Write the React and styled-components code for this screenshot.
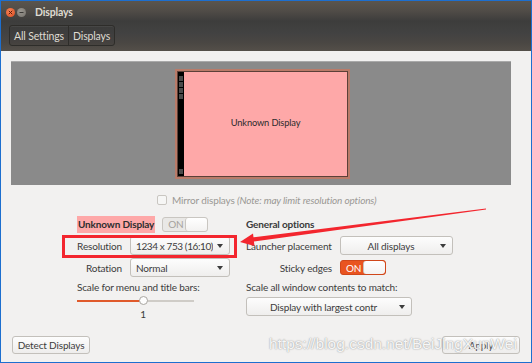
import styled, { createGlobalStyle } from "styled-components";

const GlobalStyle = createGlobalStyle`
  html, body { margin: 0; padding: 0; }
  body { font-family: "Lato", "Liberation Sans", sans-serif; }
  * { box-sizing: border-box; }
`;

const Window = styled.div`
  position: relative;
  width: 532px;
  height: 363px;
  border: 1px solid #1d6fcf;
  background: #f2f1f0;
  display: flex;
  flex-direction: column;
  overflow: hidden;
  font-size: 10px;
  letter-spacing: -0.15px;
  color: #3c3c3c;
`;

const Header = styled.div`
  height: 50px;
  background: linear-gradient(
    to bottom,
    #5a554e 0,
    #504c47 10px,
    #3d3d3c 20px,
    #424242 32px,
    #4a4743 42px,
    #544f49 50px
  );
  display: flex;
  flex-direction: column;
`;

const TitleBar = styled.div`
  height: 19px;
  display: flex;
  align-items: center;
  padding-left: 5px;
  gap: 2px;
`;

const WinDot = styled.span`
  width: 9px;
  height: 9px;
  border-radius: 50%;
  display: flex;
  align-items: center;
  justify-content: center;
  background: ${(p) =>
    p.$close
      ? "radial-gradient(circle at 40% 35%, #f68356, #df4b1f)"
      : "radial-gradient(circle at 40% 35%, #9a968f, #75726c)"};
  margin-top: 3px;
`;

const Title = styled.span`
  margin-left: 7px;
  margin-top: 3px;
  font-weight: bold;
  color: #dfdbd2;
  font-size: 10.5px;
`;

const ToolBar = styled.div`
  flex: 1;
  display: flex;
  align-items: center;
  padding-left: 8px;
`;

const Crumbs = styled.div`
  display: flex;
  height: 21px;
  border: 1px solid #2e2d2a;
  border-radius: 3px;
  box-shadow: inset 0 1px 0 rgba(255, 255, 255, 0.06);
  background: rgba(0, 0, 0, 0.06);
`;

const Crumb = styled.div`
  display: flex;
  align-items: center;
  padding: 0 4px;
  color: #dfdbd2;
  font-size: 10.5px;
  & + & { border-left: 1px solid #2e2d2a; }
`;

const Content = styled.div`
  flex: 1;
  display: flex;
  flex-direction: column;
  padding: 10px 0 8px 10px;
`;

const Preview = styled.div`
  width: 500px;
  height: 124px;
  background: #8a8a8a;
  border-top: 1px solid #a9a9a9;
  display: flex;
  justify-content: center;
  padding-top: 7px;
`;

const Monitor = styled.div`
  width: 175px;
  height: 110px;
  margin-left: 3px;
  border: 2px solid #b97b69;
  display: flex;
`;

const MonitorInner = styled.div`
  flex: 1;
  border: 1px solid #5c4038;
  background: #fea8a8;
  display: flex;
`;

const Launcher = styled.div`
  width: 6px;
  background: #000;
  display: flex;
  flex-direction: column;
  align-items: center;
  padding-top: 4px;
  gap: 1px;
`;

const LaunchIcon = styled.span`
  width: 4px;
  height: 5px;
  background: #4a4a4a;
  margin-top: ${(p) => (p.$bottom ? "auto" : "0")};
  margin-bottom: ${(p) => (p.$bottom ? "2px" : "0")};
`;

const MonitorLabel = styled.div`
  flex: 1;
  display: flex;
  align-items: center;
  justify-content: center;
  font-size: 9.3px;
  color: #2c2c2c;
  padding-bottom: 4px;
`;

const MirrorRow = styled.div`
  display: flex;
  align-items: center;
  margin: 9px 0 0 146px;
  height: 12px;
  color: #9a9894;
  gap: 5px;
`;

const CheckBox = styled.span`
  width: 10px;
  height: 10px;
  border: 1px solid #c9c6c1;
  border-radius: 2px;
  background: #f6f6f5;
`;

const Note = styled.i`
  font-style: italic;
`;

const Settings = styled.div`
  margin: 9px 0 0 66px;
  display: grid;
  grid-template-columns: 45px 108px 86px auto;
  grid-template-rows: 18px 19px 19px 14px auto;
  column-gap: 8px;
  row-gap: 3px;
  align-items: center;
`;

const DisplayName = styled.div`
  grid-column: 1 / 3;
  display: flex;
  align-items: center;
  gap: 7px;
`;

const NameTag = styled.span`
  background: #fea8a8;
  font-weight: bold;
  color: #2e2e2e;
  padding: 2px 1px;
  height: 17px;
  display: flex;
  align-items: center;
`;

const Heading = styled.div`
  grid-column: ${(p) => p.$col || "auto"};
  font-weight: bold;
  color: #3a3a3a;
`;

const Label = styled.div`
  text-align: ${(p) => (p.$left ? "left" : "right")};
  white-space: nowrap;
  grid-column: ${(p) => p.$col || "auto"};
  align-self: ${(p) => (p.$top ? "start" : "center")};
`;

const Combo = styled.div`
  width: ${(p) => p.$w || 100}px;
  height: 19px;
  border: 1px solid #c3c0bb;
  border-radius: 3px;
  background: linear-gradient(#fdfdfd, #efeeed);
  display: flex;
  align-items: center;
  padding: 0 6px 0 5px;
  color: #3c3c3c;
  align-self: ${(p) => (p.$top ? "start" : "center")};
  grid-column: ${(p) => p.$col || "auto"};
`;

const ComboText = styled.span`
  flex: 1;
  text-align: ${(p) => (p.$center ? "center" : "left")};
  letter-spacing: ${(p) => (p.$tight ? "-0.4px" : "inherit")};
  white-space: nowrap;
  overflow: hidden;
`;

const Caret = styled.span`
  flex: none;
  width: 0;
  height: 0;
  border-left: 3.5px solid transparent;
  border-right: 3.5px solid transparent;
  border-top: 4px solid #3c3c3c;
  margin-left: 4px;
`;

const Switch = styled.div`
  width: 46px;
  height: 15px;
  border: 1px solid ${(p) => (p.$on ? "#d0471a" : "#c9c6c1")};
  border-radius: 3px;
  display: flex;
  overflow: hidden;
  background: ${(p) => (p.$on ? "#e95420" : "#e9e8e6")};
`;

const SwitchText = styled.span`
  flex: 1;
  display: flex;
  align-items: center;
  padding-left: 5px;
  font-size: 10px;
  color: ${(p) => (p.$on ? "#ffffff" : "#a5a19b")};
`;

const Knob = styled.span`
  width: 22px;
  background: linear-gradient(#ffffff, #f3f2f1);
  border-left: 1px solid #c9c6c1;
  border-radius: 3px;
`;

const SliderBlock = styled.div`
  grid-column: 1 / 3;
  align-self: start;
  display: flex;
  flex-direction: column;
  width: 117px;
`;

const Track = styled.div`
  position: relative;
  height: 2px;
  margin-top: 3px;
  background: #cfccc7;
`;

const Fill = styled.div`
  height: 100%;
  background: #e05a2b;
`;

const Handle = styled.span`
  position: absolute;
  top: -4px;
  width: 9px;
  height: 9px;
  margin-left: -4.5px;
  border-radius: 50%;
  border: 1px solid #a9a6a1;
  background: #fdfdfd;
`;

const Value = styled.div`
  margin-top: 6px;
  margin-left: 63px;
  width: 6px;
  text-align: center;
`;

const Footer = styled.div`
  margin-top: auto;
  display: flex;
  justify-content: space-between;
  padding: 0 11px 0 1px;
`;

const Button = styled.div`
  width: 78px;
  height: 18px;
  border: 1px solid #c3c0bb;
  border-radius: 3px;
  background: linear-gradient(#fdfdfd, #eeedec);
  display: flex;
  align-items: center;
  justify-content: center;
  color: #3c3c3c;
`;

const Annotation = styled.svg`
  position: absolute;
  left: -1px;
  top: -1px;
  pointer-events: none;
`;

const Watermark = styled.div`
  position: absolute;
  left: 268px;
  top: 334px;
  font-family: "Liberation Sans", Arial, sans-serif;
  font-size: 15.5px;
  letter-spacing: 0;
  color: rgba(255, 255, 255, 0.92);
  text-shadow: 0 0 1px #9c9c9c, 0 0 2px #b5b5b5;
  white-space: nowrap;
  pointer-events: none;
`;

const sliderValue = 0.57;

export default function App() {
  return (
    <>
      <GlobalStyle />
      <Window>
        <Header>
          <TitleBar>
            <WinDot $close>
              <svg width="5" height="5" viewBox="0 0 5 5">
                <path d="M0.8 0.8L4.2 4.2M4.2 0.8L0.8 4.2" stroke="#5a1a08" strokeWidth="1" />
              </svg>
            </WinDot>
            <WinDot>
              <svg width="5" height="5" viewBox="0 0 5 5">
                <path d="M0.5 2.5H4.5" stroke="#3a3835" strokeWidth="1" />
              </svg>
            </WinDot>
            <Title>Displays</Title>
          </TitleBar>
          <ToolBar>
            <Crumbs>
              <Crumb>All Settings</Crumb>
              <Crumb>Displays</Crumb>
            </Crumbs>
          </ToolBar>
        </Header>

        <Content>
          <Preview>
            <Monitor>
              <MonitorInner>
                <Launcher>
                  <LaunchIcon />
                  <LaunchIcon />
                  <LaunchIcon />
                  <LaunchIcon />
                  <LaunchIcon $bottom />
                </Launcher>
                <MonitorLabel>Unknown Display</MonitorLabel>
              </MonitorInner>
            </Monitor>
          </Preview>

          <MirrorRow>
            <CheckBox />
            <span>
              Mirror displays <Note>(Note: may limit resolution options)</Note>
            </span>
          </MirrorRow>

          <Settings>
            <DisplayName>
              <NameTag>Unknown Display</NameTag>
              <Switch>
                <SwitchText>ON</SwitchText>
                <Knob />
              </Switch>
            </DisplayName>
            <Heading $col="3 / 5">General options</Heading>

            <Label>Resolution</Label>
            <Combo>
              <ComboText $tight>1234 x 753 (16:10)</ComboText>
              <Caret />
            </Combo>
            <Label $left>Launcher placement</Label>
            <Combo $w={113}>
              <ComboText $center>All displays</ComboText>
              <Caret />
            </Combo>

            <Label>Rotation</Label>
            <Combo>
              <ComboText>Normal</ComboText>
              <Caret />
            </Combo>
            <Label>Sticky edges</Label>
            <Switch $on>
              <SwitchText $on>ON</SwitchText>
              <Knob />
            </Switch>

            <Label $left $col="1 / 3">Scale for menu and title bars:</Label>
            <Label $left $col="3 / 5">Scale all window contents to match:</Label>

            <SliderBlock>
              <Track>
                <Fill style={{ width: `${sliderValue * 100}%` }} />
                <Handle style={{ left: `${sliderValue * 100}%` }} />
              </Track>
              <Value>1</Value>
            </SliderBlock>
            <Combo $w={166} $col="3 / 5" $top>
              <ComboText $center>Display with largest contr</ComboText>
              <Caret />
            </Combo>
          </Settings>

          <Footer>
            <Button>Detect Displays</Button>
            <Button>Apply</Button>
          </Footer>
        </Content>

        <Annotation width="532" height="363" viewBox="0 0 532 363">
          <rect x="63.5" y="236.5" width="172" height="20" fill="none" stroke="#f3262e" strokeWidth="3" />
          <polygon points="486,208.6 486,209.6 252,241.8 251.4,237.6" fill="#f3262e" />
          <polygon points="240,242 253,233.5 254.5,246" fill="#f3262e" />
        </Annotation>
        <Watermark>https://blog.csdn.net/BeiJingXunWei</Watermark>
      </Window>
    </>
  );
}
